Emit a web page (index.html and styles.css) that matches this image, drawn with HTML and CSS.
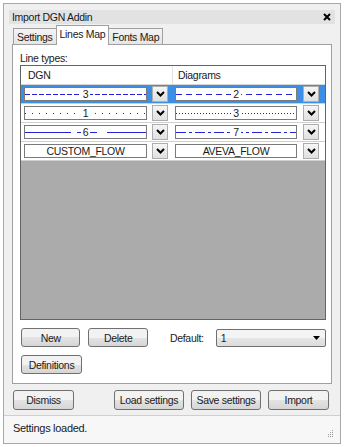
FILE: index.html
```html
<!DOCTYPE html>
<html lang="en">
<head>
    <meta charset="UTF-8">
    <title>Import DGN Addin</title>
    <link rel="stylesheet" href="styles.css">
</head>
<body>
    <div class="window">
        <div class="titlebar">
            <span>Import DGN Addin</span>
            <svg class="close" width="8" height="8" viewBox="0 0 8 8"><path d="M1 1L7 7M7 1L1 7" stroke="#000" stroke-width="2"/></svg>
        </div>

        <div class="tabs">
            <div class="tab">Settings</div>
            <div class="tab active">Lines Map</div>
            <div class="tab">Fonts Map</div>
        </div>

        <div class="panel">
            <div class="label">Line types:</div>
            <div class="grid">
                <div class="grid-head">
                    <div class="cell">DGN</div>
                    <div class="cell right">Diagrams</div>
                </div>

                <div class="grid-row selected">
                    <div class="cell">
                        <div class="combo dash-a"><span class="num">3</span></div>
                        <div class="drop"><svg width="9" height="6" viewBox="0 0 9 6"><path d="M1 1L4.5 4.5L8 1" fill="none" stroke="#000" stroke-width="2"/></svg></div>
                    </div>
                    <div class="cell right">
                        <div class="combo dash-b"><span class="num">2</span></div>
                        <div class="drop"><svg width="9" height="6" viewBox="0 0 9 6"><path d="M1 1L4.5 4.5L8 1" fill="none" stroke="#000" stroke-width="2"/></svg></div>
                    </div>
                </div>

                <div class="grid-row">
                    <div class="cell">
                        <div class="combo dot-a"><span class="num">1</span></div>
                        <div class="drop"><svg width="9" height="6" viewBox="0 0 9 6"><path d="M1 1L4.5 4.5L8 1" fill="none" stroke="#000" stroke-width="2"/></svg></div>
                    </div>
                    <div class="cell right">
                        <div class="combo dot-b"><span class="num">3</span></div>
                        <div class="drop"><svg width="9" height="6" viewBox="0 0 9 6"><path d="M1 1L4.5 4.5L8 1" fill="none" stroke="#000" stroke-width="2"/></svg></div>
                    </div>
                </div>

                <div class="grid-row">
                    <div class="cell">
                        <div class="combo long-a"><span class="num">6</span></div>
                        <div class="drop"><svg width="9" height="6" viewBox="0 0 9 6"><path d="M1 1L4.5 4.5L8 1" fill="none" stroke="#000" stroke-width="2"/></svg></div>
                    </div>
                    <div class="cell right">
                        <div class="combo dashdot"><span class="num">7</span></div>
                        <div class="drop"><svg width="9" height="6" viewBox="0 0 9 6"><path d="M1 1L4.5 4.5L8 1" fill="none" stroke="#000" stroke-width="2"/></svg></div>
                    </div>
                </div>

                <div class="grid-row">
                    <div class="cell">
                        <div class="combo"><span class="name">CUSTOM_FLOW</span></div>
                        <div class="drop"><svg width="9" height="6" viewBox="0 0 9 6"><path d="M1 1L4.5 4.5L8 1" fill="none" stroke="#000" stroke-width="2"/></svg></div>
                    </div>
                    <div class="cell right">
                        <div class="combo"><span class="name">AVEVA_FLOW</span></div>
                        <div class="drop"><svg width="9" height="6" viewBox="0 0 9 6"><path d="M1 1L4.5 4.5L8 1" fill="none" stroke="#000" stroke-width="2"/></svg></div>
                    </div>
                </div>

                <div class="grid-empty"></div>
            </div>

            <div class="actions">
                <button class="btn">New</button>
                <button class="btn">Delete</button>
                <span class="default-label">Default:</span>
                <div class="select">
                    <span>1</span>
                    <svg width="7" height="4" viewBox="0 0 7 4"><path d="M0 0H7L3.5 4Z" fill="#000"/></svg>
                </div>
            </div>
            <div class="actions">
                <button class="btn">Definitions</button>
            </div>
        </div>

        <div class="footer">
            <button class="btn">Dismiss</button>
            <div class="footer-right">
                <button class="btn wide">Load settings</button>
                <button class="btn wide">Save settings</button>
                <button class="btn">Import</button>
            </div>
        </div>

        <div class="status">
            <span>Settings loaded.</span>
            <svg class="grip" width="7" height="7" viewBox="0 0 7 7">
                <rect x="5" y="0" width="1" height="1" fill="#999"/>
                <rect x="3" y="2" width="1" height="1" fill="#999"/>
                <rect x="5" y="2" width="1" height="1" fill="#999"/>
                <rect x="1" y="4" width="1" height="1" fill="#999"/>
                <rect x="3" y="4" width="1" height="1" fill="#999"/>
                <rect x="5" y="4" width="1" height="1" fill="#999"/>
                <rect x="1" y="6" width="1" height="1" fill="#999"/>
                <rect x="3" y="6" width="1" height="1" fill="#999"/>
                <rect x="5" y="6" width="1" height="1" fill="#999"/>
            </svg>
        </div>
    </div>
</body>
</html>
```

FILE: styles.css
```css
* {
    box-sizing: border-box;
}
body {
    margin: 0;
    background: #fff;
    font-family: "Liberation Sans", Arial, sans-serif;
    font-size: 10.5px;
    letter-spacing: -0.3px;
    color: #1a1a1a;
}
.window {
    margin: 3px;
    width: 338px;
    height: 441px;
    border: 1px solid #a8a8a8;
    background: #f0f0f0;
    display: flex;
    flex-direction: column;
}
.titlebar {
    margin: 6px 5px 0 5px;
    height: 14px;
    background: #e2e2e2;
    display: flex;
    align-items: center;
    justify-content: space-between;
    padding: 0 4px 0 3px;
}
.close {
    display: block;
}

/* tabs */
.tabs {
    display: flex;
    align-items: flex-end;
    margin: 1px 0 0 8px;
    height: 19px;
}
.tab {
    height: 17px;
    padding: 0 3px;
    line-height: 16px;
    border: 1px solid #a0a0a0;
    border-bottom: none;
    background: linear-gradient(#f3f3f3, #e5e5e5);
    margin-bottom: -1px;
}
.tab:first-child {
    margin-left: 1px;
}
.tab.active {
    height: 20px;
    background: #fff;
    position: relative;
    z-index: 1;
    margin-left: -1px;
    margin-right: -1px;
    padding: 0 3px;
}
.panel {
    margin: 0 8px 0 8px;
    height: 340px;
    border: 1px solid #a0a0a0;
    background: #fff;
    padding: 7px 5px 0 7px;
}
.label {
    height: 13px;
    line-height: 12px;
}

/* grid */
.grid {
    height: 255px;
    border: 1px solid #646464;
    display: flex;
    flex-direction: column;
    background: #ababab;
}
.grid-head,
.grid-row {
    display: flex;
    background: #fff;
}
.grid-head {
    height: 19px;
    line-height: 18px;
    border-bottom: 1px solid #d6d6d6;
}
.grid-head .cell {
    padding-left: 7px;
}
.grid-head .cell.right {
    border-left: 1px solid #e2e2e2;
    padding-left: 5px;
}
.grid-row {
    height: 19px;
    border-bottom: 1px solid #d0d0d0;
}
.grid-row.selected {
    background: #3d8fe6;
}
.cell {
    width: 151px;
    display: flex;
    align-items: center;
    padding-left: 3px;
}
.cell.right {
    width: 153px;
}
.combo {
    width: 123px;
    height: 14px;
    border: 1px solid #7a7a7a;
    background-color: #fff;
    display: flex;
    justify-content: center;
    align-items: center;
    background-repeat: no-repeat;
    background-size: 100% 1px;
    background-position: 0 50%;
}
.cell.right .combo {
    width: 122px;
}
.num {
    background: #fff;
    padding: 0 2px;
    line-height: 12px;
}
.name {
    line-height: 12px;
}
.dash-a {
    background-image: repeating-linear-gradient(to right, #2323d8 0 5px, transparent 5px 7px);
}
.dash-b {
    background-image: repeating-linear-gradient(to right, #2323d8 0 6px, transparent 6px 10px);
}
.dot-a {
    background-image: repeating-linear-gradient(to right, #2323d8 0 1px, transparent 1px 7px);
}
.dot-b {
    background-image: repeating-linear-gradient(to right, #2323d8 0 1px, transparent 1px 3px);
}
.long-a {
    background-image: linear-gradient(to right, #2323d8 0 46px, transparent 46px 52px, #2323d8 52px 56px, transparent 56px 64px, #2323d8 64px 72px, transparent 72px 82px, #2323d8 82px);
}
.dashdot {
    background-image: repeating-linear-gradient(to right, #2323d8 0 10px, transparent 10px 13px, #2323d8 13px 16px, transparent 16px 19px);
}
.drop {
    width: 16px;
    height: 16px;
    margin-left: 5px;
    border: 1px solid #adadad;
    background: linear-gradient(#f6f6f6, #e0e0e0);
    display: flex;
    align-items: center;
    justify-content: center;
}
.cell.right .drop {
    margin-left: 6px;
}
.grid-empty {
    flex: 1;
}

/* buttons */
.btn {
    font-family: "Liberation Sans", Arial, sans-serif;
    font-size: 10.5px;
    letter-spacing: -0.3px;
    color: #1a1a1a;
    width: 61px;
    height: 19px;
    padding: 0;
    border: 1px solid #707070;
    border-radius: 3px;
    background: linear-gradient(#f2f2f2 0 50%, #e3e3e3 50%, #d6d6d6);
}
.btn.wide {
    width: 70px;
}
.actions {
    display: flex;
    align-items: center;
    gap: 8px;
    margin-top: 8px;
    padding-left: 1px;
}
.actions:first-of-type {
    margin-top: 9px;
}
.default-label {
    margin-left: 14px;
}
.select {
    width: 113px;
    height: 18px;
    margin-left: 4px;
    border: 1px solid #707070;
    border-radius: 2px;
    background: linear-gradient(#f4f4f4 0 50%, #e6e6e6 50%, #dcdcdc);
    display: flex;
    align-items: center;
    justify-content: space-between;
    padding: 0 5px 0 4px;
}

/* footer */
.footer {
    display: flex;
    justify-content: space-between;
    margin: 6px 11px 0 9px;
}
.footer-right {
    display: flex;
    gap: 7px;
}
.footer .btn {
    height: 20px;
}
.status {
    margin: 5px 0 0 0;
    flex: 1;
    border-top: 1px solid #cfcfcf;
    background: #f7f7f7;
    display: flex;
    align-items: center;
    justify-content: space-between;
    padding: 0 6px 3px 9px;
    font-size: 11px;
}
.grip {
    align-self: flex-end;
    margin-bottom: 3px;
}
```
